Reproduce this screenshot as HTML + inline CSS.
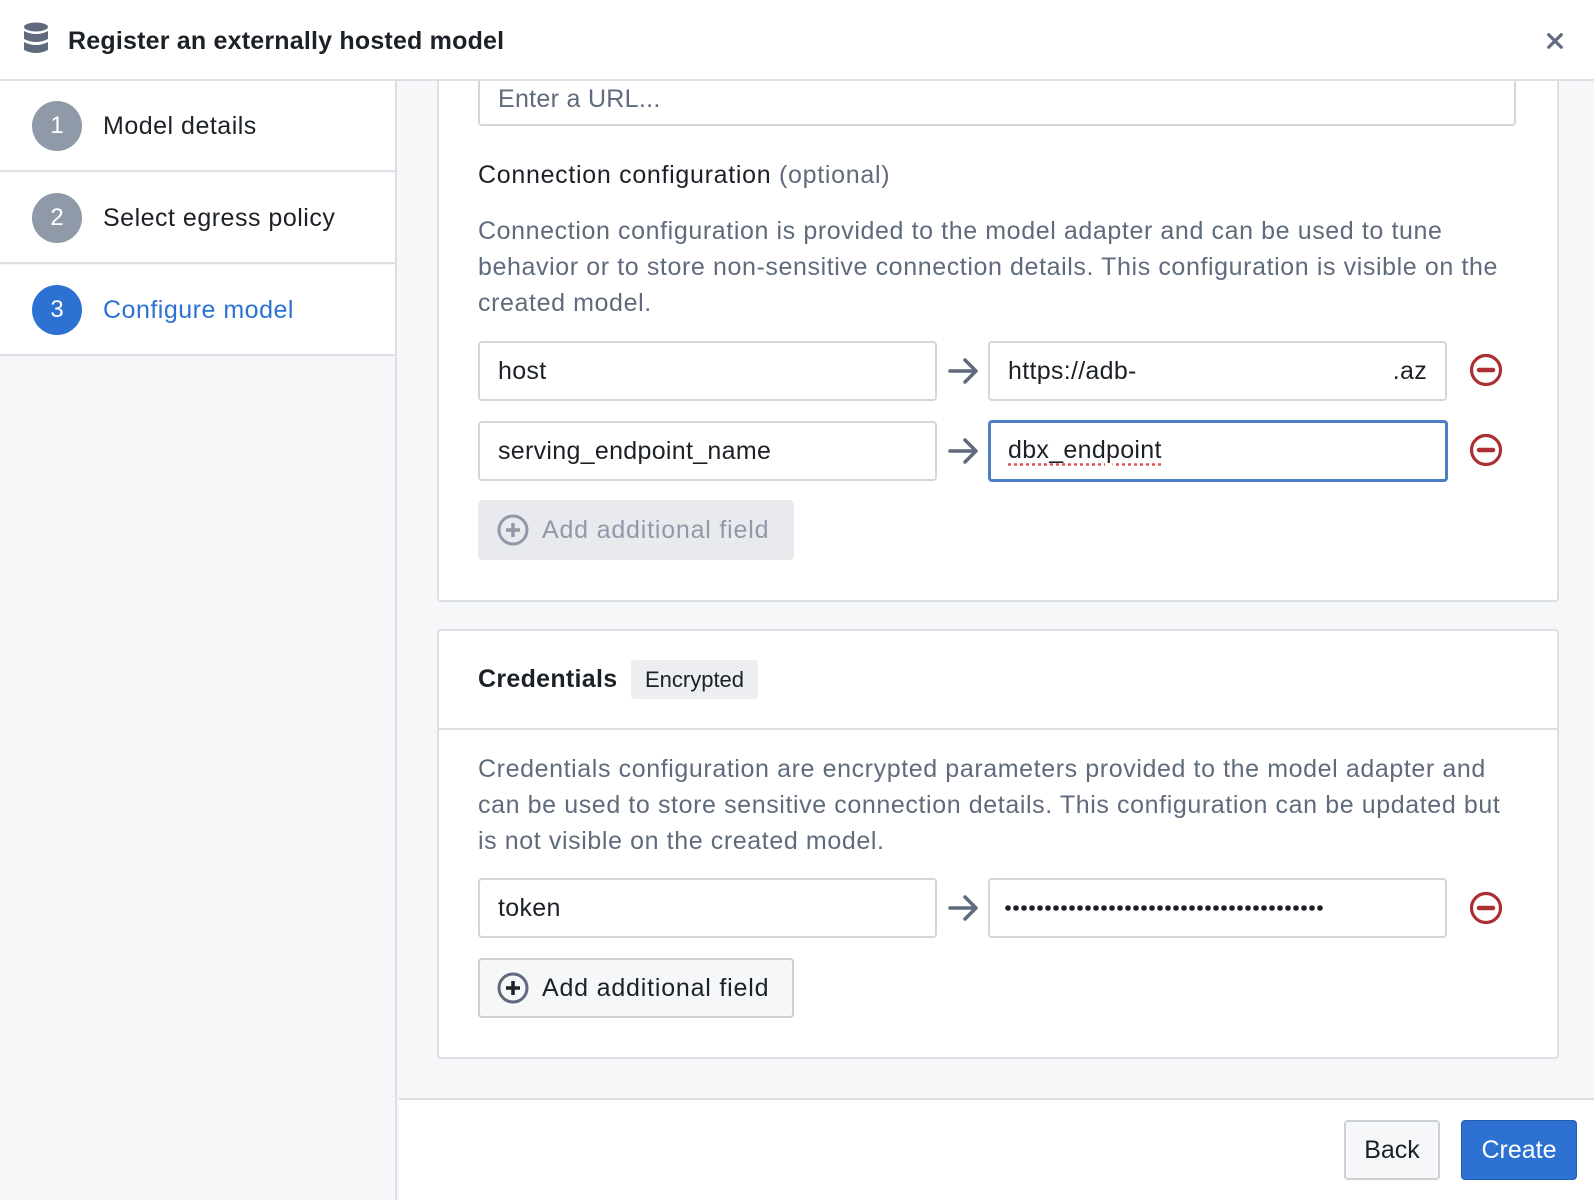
<!DOCTYPE html>
<html><head><meta charset="utf-8"><style>
*{box-sizing:border-box;margin:0;padding:0}
body{width:1594px;height:1200px;overflow:hidden;background:#f6f7f9;font-family:"Liberation Sans",sans-serif;color:#1c2127;position:relative}
.a{position:absolute}
.hdr{left:0;top:0;width:1594px;height:81px;background:#fff;border-bottom:2px solid #dcdfe3;z-index:5}
.title{left:68px;top:27px;font-size:25px;font-weight:bold;letter-spacing:0.2px}
.left{left:0;top:81px;width:397px;height:1119px;background:#f6f7f9;border-right:2px solid #dcdfe3}
.step{position:absolute;left:0;width:395px;height:91px;background:#fff;border-bottom:2px solid #dcdfe3}
.circ{position:absolute;left:32px;top:20px;width:50px;height:50px;border-radius:50%;background:#8f99a8;color:#fff;font-size:24px;text-align:center;line-height:50px}
.stxt{position:absolute;left:103px;top:31px;font-size:25px;white-space:nowrap;letter-spacing:0.5px}
.card{background:#fff;border:2px solid #dcdfe3;border-radius:4px}
.inp{background:#fff;border:2px solid #d3d6da;border-radius:4px;font-size:25px;padding-left:18px;line-height:56px;white-space:nowrap;letter-spacing:0.3px}
.desc{font-size:25px;color:#5f6b7c;line-height:36px;white-space:nowrap;letter-spacing:0.6px}
.btn{border-radius:4px;font-size:25px;white-space:nowrap;letter-spacing:0.8px}
</style></head><body>
<div class="a hdr">
<svg class="a" style="left:23px;top:22px" width="26" height="34" viewBox="0 0 26 34"><ellipse cx="13" cy="5" rx="12" ry="4.5" fill="#5f6b7c"/><path d="M1 9 Q13 15 25 9 V17 Q13 23 1 17Z" fill="#5f6b7c"/><path d="M1 20 Q13 26 25 20 V28 Q13 34 1 28Z" fill="#5f6b7c"/></svg>
<div class="a title">Register an externally hosted model</div>
<svg class="a" style="left:1546px;top:32px" width="18" height="18" viewBox="0 0 20 20"><path d="M3 3 L17 17 M17 3 L3 17" stroke="#5f6b7c" stroke-width="3.5" stroke-linecap="round"/></svg>
</div>
<div class="a left">
<div class="step" style="top:0"><div class="circ">1</div><div class="stxt">Model details</div></div>
<div class="step" style="top:92px"><div class="circ">2</div><div class="stxt">Select egress policy</div></div>
<div class="step" style="top:184px"><div class="circ" style="background:#2d72d2">3</div><div class="stxt" style="color:#2d72d2">Configure model</div></div>
</div>

<div class="a card" style="left:437px;top:40px;width:1122px;height:562px"></div>
<div class="a inp" style="left:478px;top:60px;width:1038px;height:66px;line-height:74px;color:#5f6b7c">Enter a URL...</div>
<div class="a" style="left:478px;top:161px;font-size:25px;white-space:nowrap;letter-spacing:0.7px">Connection configuration <span style="color:#5f6b7c">(optional)</span></div>
<div class="a desc" style="left:478px;top:213px">Connection configuration is provided to the model adapter and can be used to tune<br>behavior or to store non-sensitive connection details. This configuration is visible on the<br>created model.</div>

<div class="a inp" style="left:478px;top:341px;width:459px;height:60px">host</div>
<div class="a inp" style="left:988px;top:341px;width:459px;height:60px">https://adb-<span style="position:absolute;right:18px">.az</span></div>
<div class="a inp" style="left:478px;top:421px;width:459px;height:60px">serving_endpoint_name</div>
<div class="a inp" style="left:988px;top:420px;width:460px;height:62px;border:3px solid #4c7fc3;line-height:54px;padding-left:17px"><span style="text-decoration:underline dotted #e05050;text-underline-offset:5px">dbx_endpoint</span></div>

<div class="a btn" style="left:478px;top:500px;width:316px;height:60px;background:#e8eaed;color:#8f99a8;line-height:60px;padding-left:64px">Add additional field</div>
<svg class="a" style="left:497px;top:514px" width="32" height="32" viewBox="0 0 32 32"><circle cx="16" cy="16" r="14" fill="none" stroke="#8f99a8" stroke-width="3"/><path d="M16 9V23M9 16H23" stroke="#8f99a8" stroke-width="3.5"/></svg>

<div class="a card" style="left:437px;top:629px;width:1122px;height:430px"></div>
<div class="a" style="left:439px;top:728px;width:1118px;height:2px;background:#dcdfe3"></div>
<div class="a" style="left:478px;top:665px;font-size:25px;font-weight:bold;letter-spacing:0.3px">Credentials</div>
<div class="a" style="left:631px;top:660px;width:127px;height:39px;background:#eceef1;border-radius:3px;font-size:22px;line-height:39px;text-align:center">Encrypted</div>
<div class="a desc" style="left:478px;top:751px">Credentials configuration are encrypted parameters provided to the model adapter and<br>can be used to store sensitive connection details. This configuration can be updated but<br>is not visible on the created model.</div>
<div class="a inp" style="left:478px;top:878px;width:459px;height:60px">token</div>
<div class="a inp" style="left:988px;top:878px;width:459px;height:60px"></div>
<svg class="a" style="left:1004px;top:903px" width="330" height="10"><g fill="#1c2127">
<circle cx="4" cy="5" r="2.8"/><circle cx="12" cy="5" r="2.8"/><circle cx="20" cy="5" r="2.8"/><circle cx="28" cy="5" r="2.8"/><circle cx="36" cy="5" r="2.8"/><circle cx="44" cy="5" r="2.8"/><circle cx="52" cy="5" r="2.8"/><circle cx="60" cy="5" r="2.8"/><circle cx="68" cy="5" r="2.8"/><circle cx="76" cy="5" r="2.8"/><circle cx="84" cy="5" r="2.8"/><circle cx="92" cy="5" r="2.8"/><circle cx="100" cy="5" r="2.8"/><circle cx="108" cy="5" r="2.8"/><circle cx="116" cy="5" r="2.8"/><circle cx="124" cy="5" r="2.8"/><circle cx="132" cy="5" r="2.8"/><circle cx="140" cy="5" r="2.8"/><circle cx="148" cy="5" r="2.8"/><circle cx="156" cy="5" r="2.8"/><circle cx="164" cy="5" r="2.8"/><circle cx="172" cy="5" r="2.8"/><circle cx="180" cy="5" r="2.8"/><circle cx="188" cy="5" r="2.8"/><circle cx="196" cy="5" r="2.8"/><circle cx="204" cy="5" r="2.8"/><circle cx="212" cy="5" r="2.8"/><circle cx="220" cy="5" r="2.8"/><circle cx="228" cy="5" r="2.8"/><circle cx="236" cy="5" r="2.8"/><circle cx="244" cy="5" r="2.8"/><circle cx="252" cy="5" r="2.8"/><circle cx="260" cy="5" r="2.8"/><circle cx="268" cy="5" r="2.8"/><circle cx="276" cy="5" r="2.8"/><circle cx="284" cy="5" r="2.8"/><circle cx="292" cy="5" r="2.8"/><circle cx="300" cy="5" r="2.8"/><circle cx="308" cy="5" r="2.8"/><circle cx="316" cy="5" r="2.8"/></g></svg>

<div class="a btn" style="left:478px;top:958px;width:316px;height:60px;background:#f6f7f9;border:2px solid #cdd1d6;line-height:56px;padding-left:62px">Add additional field</div>
<svg class="a" style="left:497px;top:972px" width="32" height="32" viewBox="0 0 32 32"><circle cx="16" cy="16" r="14" fill="none" stroke="#5f6b7c" stroke-width="3"/><path d="M16 9V23M9 16H23" stroke="#1c2127" stroke-width="3.5"/></svg>

<svg class="a" style="left:0;top:0" width="1594" height="1200">
<g stroke="#5f6b7c" stroke-width="3.5" fill="none" stroke-linecap="round" stroke-linejoin="round">
<path d="M950 371H976M965 360L976 371L965 382"/>
<path d="M950 451H976M965 440L976 451L965 462"/>
<path d="M950 908H976M965 897L976 908L965 919"/>
</g>
<g stroke="#ac2f33" stroke-width="3.2" fill="none">
<circle cx="1486" cy="370" r="14.5"/><circle cx="1486" cy="450" r="14.5"/><circle cx="1486" cy="908" r="14.5"/>
</g>
<g stroke="#ac2f33" stroke-width="4.5" stroke-linecap="round">
<path d="M1479 370H1493M1479 450H1493M1479 908H1493"/>
</g>
</svg>

<div class="a" style="left:399px;top:1098px;width:1195px;height:102px;background:#fff;border-top:2px solid #dcdfe3"></div>
<div class="a btn" style="left:1344px;top:1120px;width:96px;height:60px;background:#f6f7f9;border:2px solid #cdd1d6;line-height:56px;text-align:center;letter-spacing:0">Back</div>
<div class="a btn" style="left:1461px;top:1120px;width:116px;height:60px;background:#2d72d2;border:1px solid #215db0;color:#fff;line-height:58px;text-align:center;letter-spacing:0">Create</div>
</body></html>
